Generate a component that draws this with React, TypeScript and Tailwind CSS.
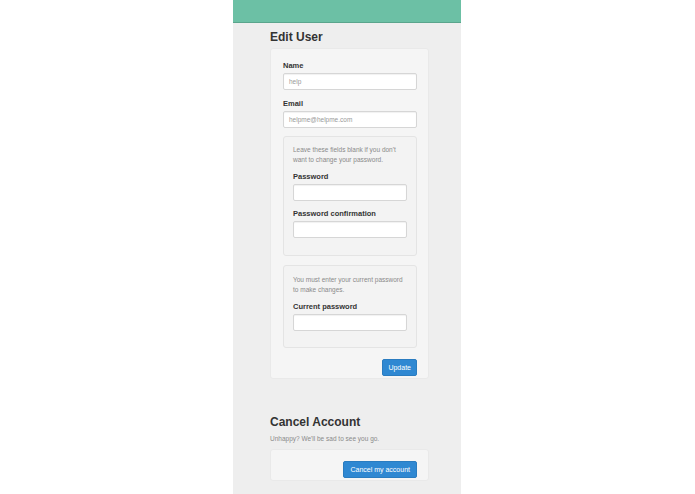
const Field = ({ label, value, narrow }: { label: string; value?: string; narrow?: boolean }) => (
    <div className="flex flex-col">
        <label className="text-[7.5px] font-bold text-[#333] leading-[9px] mb-[3px]">{label}</label>
        <div
            className={`h-[17px] bg-white border border-[#d6d6d6] rounded-[2px] shadow-[inset_0_1px_1px_rgba(0,0,0,0.06)] flex items-center px-[5px] text-[6.5px] text-[#999] font-light ${narrow ? "w-[114px]" : "w-[134px]"}`}
        >
            {value}
        </div>
    </div>
);

export default function App() {
    return (
        <div className="w-[695px] h-[494px] bg-white flex justify-center" style={{ fontFamily: '"Liberation Sans", Arial, sans-serif' }}>
            <div className="w-[228px] h-full bg-[#eeeeee] flex flex-col ml-[-1px]">
                <div className="h-[23px] bg-[#6cc0a5] border-b border-[#5aa58c] shrink-0" />

                <div className="pl-[37px] flex flex-col">
                    <h1 className="text-[12px] font-bold text-[#333] mt-[6px] leading-[16px]">Edit User</h1>

                    <div className="w-[159px] mt-[3px] bg-[#f5f5f5] border border-[#e9e9e9] rounded-[3px] pl-[12px] pr-[11px] pt-[12px] pb-[2px] flex flex-col">
                        <div className="flex flex-col gap-[9px]">
                            <Field label="Name" value="help" />
                            <Field label="Email" value="helpme@helpme.com" />
                        </div>

                        <div className="mt-[8px] w-[134px] bg-[#f3f3f3] border border-[#e4e4e4] rounded-[3px] px-[9px] pt-[8px] pb-[17px] flex flex-col">
                            <p className="text-[6.5px] text-[#8a8a8a] leading-[10px] font-light">
                                Leave these fields blank if you don't want to change your password.
                            </p>
                            <div className="mt-[7px] flex flex-col gap-[8px]">
                                <Field label="Password" narrow />
                                <Field label="Password confirmation" narrow />
                            </div>
                        </div>

                        <div className="mt-[9px] w-[134px] bg-[#f3f3f3] border border-[#e4e4e4] rounded-[3px] px-[9px] pt-[9px] pb-[16px] flex flex-col">
                            <p className="text-[6.5px] text-[#8a8a8a] leading-[10px] font-light">
                                You must enter your current password to make changes.
                            </p>
                            <div className="mt-[7px]">
                                <Field label="Current password" narrow />
                            </div>
                        </div>

                        <div className="flex justify-end mt-[11px]">
                            <button className="h-[17px] px-[5px] bg-[#2f88d2] border border-[#2a7cc0] rounded-[2px] text-white text-[7px] leading-none">
                                Update
                            </button>
                        </div>
                    </div>

                    <h2 className="text-[12px] font-bold text-[#333] mt-[35px] leading-[16px]">Cancel Account</h2>
                    <p className="text-[6.5px] text-[#8a8a8a] mt-[4px] leading-[9px] font-light">Unhappy? We'll be sad to see you go.</p>

                    <div className="w-[159px] mt-[6px] bg-[#f5f5f5] border border-[#e9e9e9] rounded-[3px] px-[11px] pt-[11px] pb-[2px] flex justify-end">
                        <button className="h-[17px] px-[6px] bg-[#2f88d2] border border-[#2a7cc0] rounded-[2px] text-white text-[7px] leading-none">
                            Cancel my account
                        </button>
                    </div>
                </div>
            </div>
        </div>
    );
}
